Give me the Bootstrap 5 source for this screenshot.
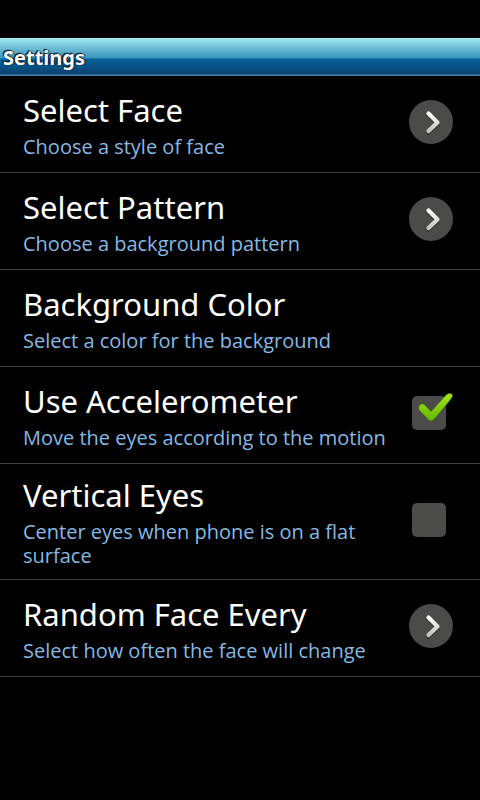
<!DOCTYPE html>
<html lang="en">
<head>
<meta charset="utf-8">
<meta name="viewport" content="width=device-width, initial-scale=1">
<title>Settings</title>
<link rel="stylesheet" href="https://cdn.jsdelivr.net/npm/bootstrap@5.3.0/dist/css/bootstrap.min.css">
<style>
body{background:#000;color:#fff;font-family:"Open Sans","Noto Sans",sans-serif}
.title-strip{margin-top:38px;height:38px;padding-left:3px;background:linear-gradient(#a5ecf2 0,#8ad8e6 4px,#3a93b9 20px,#06629a 21px,#0a4270 36px,#4a82ae 37px)}
.title-strip h1{font-family:"Noto Sans",sans-serif;font-size:20px;line-height:40px;font-weight:700;text-shadow:-1px -1px 1px #000,1px 0 1px #012}
.pref{min-height:97px;padding:11px 27px 11px 23px;background:transparent;color:#fff;border:0;border-bottom:1px solid #424242;text-align:left}
.pref-title{font-family:"Noto Sans",sans-serif;font-size:31px;line-height:40px;margin-bottom:5px}
.pref-note{font-size:20px;line-height:24px;color:#86b9e4}
.widget{width:44px;margin:0 0 4px 16px}
.tick-box{appearance:none;width:34px;height:34px;margin-left:3px;border-radius:5px;background:#4b4c4a}
.tick-mark{left:0;top:-6px;pointer-events:none;visibility:hidden}
.tick-box:checked + .tick-mark{visibility:visible}
</style>
</head>
<body>
<svg width="0" height="0" class="position-absolute" aria-hidden="true">
<defs>
<linearGradient id="arrow-fill" x1="0" y1="0" x2="0" y2="1"><stop offset="0" stop-color="#fff"/><stop offset="1" stop-color="#c4c4c4"/></linearGradient>
<linearGradient id="tick-fill" x1="0" y1="0" x2="0" y2="1"><stop offset="0" stop-color="#a4e61c"/><stop offset="1" stop-color="#63b800"/></linearGradient>
<symbol id="more" viewBox="0 0 44 46">
<circle cx="22" cy="23" r="22" fill="#4b4c4a"/>
<path d="M19.500 15.500l9 9-9 8.500" fill="none" stroke="#343434" stroke-width="5" stroke-linecap="round" stroke-linejoin="round"/>
<path d="M19.500 14.500l9 9-9 8.500" fill="none" stroke="url(#arrow-fill)" stroke-width="4.200" stroke-linecap="round" stroke-linejoin="round"/>
</symbol>
<symbol id="tick" viewBox="0 0 46 40">
<path d="M9.500 17Q12 11.500 16 15L22 21.500 37 5Q40 2 43 4 44.500 6 42 9L25.500 29Q22 33 18.500 29L10.500 20.500Q9 19 9.500 17Z" fill="url(#tick-fill)" stroke="#35560c" stroke-width=".6"/>
</symbol>
</defs>
</svg>
<header class="title-strip"><h1 class="m-0">Settings</h1></header>
<main>
<button type="button" class="pref d-flex align-items-center w-100"><span class="flex-grow-1"><span class="pref-title d-block">Select Face</span><span class="pref-note d-block">Choose a style of face</span></span><span class="widget d-flex flex-shrink-0"><svg width="44" height="46" aria-hidden="true"><use href="#more"/></svg></span></button>
<button type="button" class="pref d-flex align-items-center w-100"><span class="flex-grow-1"><span class="pref-title d-block">Select Pattern</span><span class="pref-note d-block">Choose a background pattern</span></span><span class="widget d-flex flex-shrink-0"><svg width="44" height="46" aria-hidden="true"><use href="#more"/></svg></span></button>
<button type="button" class="pref d-flex align-items-center w-100"><span class="flex-grow-1"><span class="pref-title d-block">Background Color</span><span class="pref-note d-block">Select a color for the background</span></span></button>
<label class="pref d-flex align-items-center w-100" for="accelerometer"><span class="flex-grow-1"><span class="pref-title d-block">Use Accelerometer</span><span class="pref-note d-block">Move the eyes according to the motion</span></span><span class="widget d-flex flex-shrink-0 position-relative"><input type="checkbox" class="tick-box" id="accelerometer" checked><svg class="tick-mark position-absolute" width="46" height="40" aria-hidden="true"><use href="#tick"/></svg></span></label>
<label class="pref d-flex align-items-center w-100" for="vertical"><span class="flex-grow-1"><span class="pref-title d-block">Vertical Eyes</span><span class="pref-note d-block">Center eyes when phone is on a flat surface</span></span><span class="widget d-flex flex-shrink-0 position-relative"><input type="checkbox" class="tick-box" id="vertical"><svg class="tick-mark position-absolute" width="46" height="40" aria-hidden="true"><use href="#tick"/></svg></span></label>
<button type="button" class="pref d-flex align-items-center w-100"><span class="flex-grow-1"><span class="pref-title d-block">Random Face Every</span><span class="pref-note d-block">Select how often the face will change</span></span><span class="widget d-flex flex-shrink-0"><svg width="44" height="46" aria-hidden="true"><use href="#more"/></svg></span></button>
</main>
<script src="https://cdn.jsdelivr.net/npm/bootstrap@5.3.0/dist/js/bootstrap.bundle.min.js"></script>
</body>
</html>
